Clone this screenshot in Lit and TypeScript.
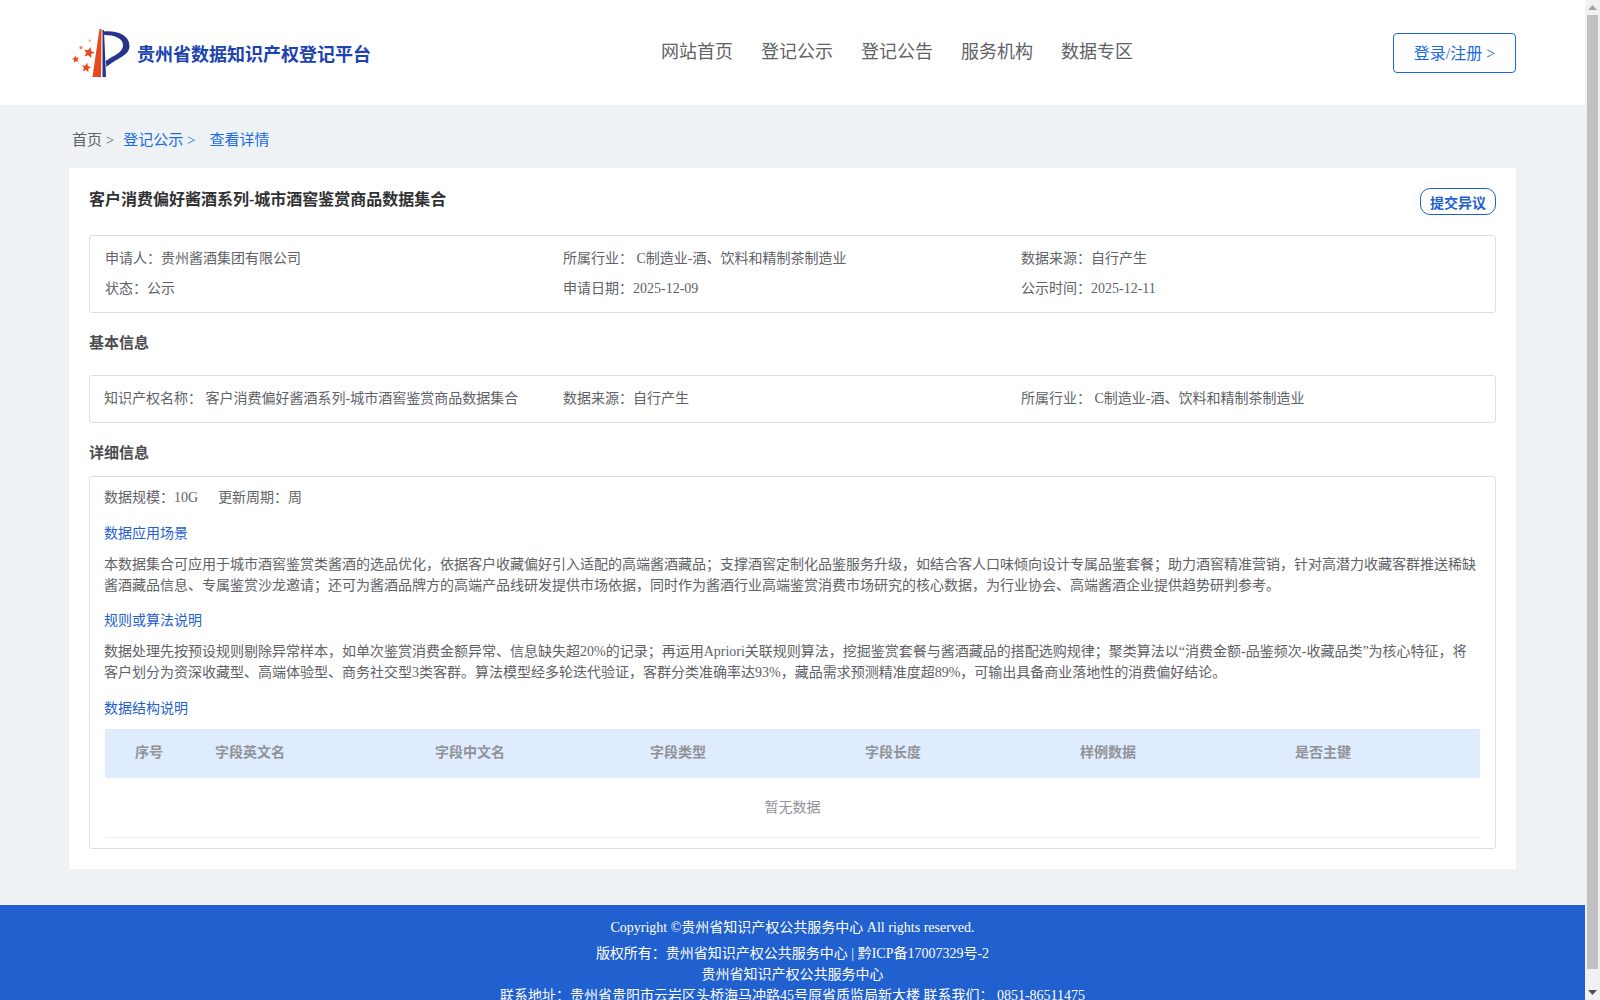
import { LitElement, html, css, svg } from 'lit';
import { customElement } from 'lit/decorators.js';

const columns = ['序号', '字段英文名', '字段中文名', '字段类型', '字段长度', '样例数据', '是否主键'];

// five pointed star, returned as polygon points
function starPoints(cx: number, cy: number, r: number, rot: number) {
  const pts: string[] = [];
  for (let i = 0; i < 10; i++) {
    const rad = i % 2 === 0 ? r : r * 0.45;
    const a = ((rot + i * 36 - 90) * Math.PI) / 180;
    pts.push(`${(cx + rad * Math.cos(a)).toFixed(2)},${(cy + rad * Math.sin(a)).toFixed(2)}`);
  }
  return pts.join(' ');
}

@customElement('app-root')
export class AppRoot extends LitElement {
  static styles = css`
    :host {
      display: flex;
      height: 1000px;
      overflow: hidden;
      font-family: 'Liberation Serif', 'Noto Sans CJK SC', serif;
      font-size: 14px;
      color: #606266;
    }
    .page { width: 1585px; flex: none; background: #eff2f5; }
    .scrollbar { width: 15px; background: #f1f1f1; display: flex; flex-direction: column; align-items: center; }
    .sb-btn { height: 15px; width: 15px; display: flex; align-items: center; justify-content: center; }
    .sb-thumb { width: 11px; height: 954px; background: #c1c1c1; flex: none; }
    .sb-space { flex: 1; }

    header { height: 105px; background: #fff; display: flex; align-items: center; padding: 0 69px 0 72px; box-sizing: border-box; }
    .logo { display: flex; align-items: center; width: 589px; flex: none; }
    .logo-name { font-size: 18px; font-weight: 700; color: #1c43b0; margin-left: 7px; }
    nav { display: flex; gap: 28px; font-size: 18px; color: #606266; margin-top: -5px; }
    .login { margin-left: auto; margin-top: 1px; width: 123px; height: 40px; box-sizing: border-box; border: 1px solid #1a6ae6; border-radius: 4px; padding-bottom: 2px; color: #1a6ae6; font-size: 16px; display: flex; align-items: center; justify-content: center; }

    .crumbs { height: 63px; display: flex; align-items: center; padding: 4px 0 0 72px; box-sizing: border-box; font-size: 15px; }
    .crumbs a { color: #1a6ae6; }
    .crumbs .first { margin-right: 9px; }
    .crumbs .second { margin-right: 14px; }

    .card { margin-left: 69px; width: 1447px; height: 701px; box-sizing: border-box; background: #fff; padding: 20px 20px 20px 20px; }
    .title-row { display: flex; justify-content: space-between; height: 47px; }
    h1 { margin: 0; font-size: 16px; font-weight: 700; color: #303133; line-height: 24px; }
    .dispute { width: 76px; height: 27px; box-sizing: border-box; border: 1px solid #1f5fce; border-radius: 10px; color: #1f5fce; font-size: 14px; font-weight: 700; display: flex; align-items: center; justify-content: center; }

    .box { border: 1px solid #dcdfe6; border-radius: 3px; box-sizing: border-box; }
    .grid { display: grid; grid-template-columns: 459px 458px 458px; }
    .summary { height: 78px; padding: 11px 15px 7px; row-gap: 8px; grid-auto-rows: 22px; grid-template-columns: 458px 458px 458px; }
    .basic { height: 48px; padding: 0 14px 4px; align-items: center; }
    h2 { margin: 0; font-size: 15px; font-weight: 700; color: #4b4d50; box-sizing: border-box; }
    .h-basic { height: 62px; display: flex; align-items: center; padding-bottom: 6px; }
    .h-detail { height: 53px; display: flex; align-items: center; padding-top: 4px; }

    .detail { height: 373px; padding: 11px 15px 10px 15px; }
    .meta { display: flex; gap: 20px; line-height: 20px; margin-left: -1px; }
    h3 { margin: 15.5px 0 10px -1px; font-size: 14px; font-weight: 400; color: #1f5fce; line-height: 20px; }
    p { margin: 0 0 0 -1px; line-height: 21px; }

    .table { margin-top: 10.5px; }
    .thead { display: grid; grid-template-columns: 90px 220px 215px 215px 215px 215px 1fr; height: 49px; box-sizing: border-box; padding-bottom: 5px; align-items: center; background: #dfecfd; font-weight: 700; color: #909399; }
    .thead span { padding-left: 20px; }
    .thead span:first-child { padding-left: 30px; }
    .empty { height: 60px; box-sizing: border-box; padding-bottom: 4px; display: flex; align-items: center; justify-content: center; color: #909399; border-bottom: 1px solid #ebeef5; }

    footer { margin-top: 36px; height: 95px; background: #2060cf; color: #fff; text-align: center; padding-top: 12px; box-sizing: border-box; overflow: hidden; }
    footer div { line-height: 21px; }
    footer .copy { margin-bottom: 5px; }
  `;

  private logo() {
    return html`<svg width="58" height="48" viewBox="0 0 58 48">
      ${svg`
        <path d="M27.500 0 L29.500 0 L29 48 L20.500 48 Z" fill="#e8481c"/>
        <path d="M30.500 1 L32 1 L34 48 L30.500 48 Z" fill="#28348c"/>
        <path d="M31 2.500 C45 1 57.500 6 57.500 17 C57.500 27 43 30 34.500 38 L33.700 32 C42 26 51 24 51 16 C51 9 42 6 32.500 6 Z" fill="#28348c"/>
        <polygon points=${starPoints(17, 23.7, 5.8, 15)} fill="#e8481c"/>
        <polygon points=${starPoints(3.7, 30.3, 3.8, -10)} fill="#e8481c"/>
        <polygon points=${starPoints(14.3, 38.7, 5, 10)} fill="#e8481c"/>
        <circle cx="9" cy="18.700" r="1.700" fill="#f0885f"/>
        <circle cx="17.700" cy="11.700" r="1.200" fill="#f4a98c"/>
      `}
    </svg>`;
  }

  render() {
    return html`
      <div class="page">
        <header>
          <div class="logo">${this.logo()}<span class="logo-name">贵州省数据知识产权登记平台</span></div>
          <nav><span>网站首页</span><span>登记公示</span><span>登记公告</span><span>服务机构</span><span>数据专区</span></nav>
          <div class="login">登录/注册 &gt;</div>
        </header>
        <div class="crumbs">
          <span class="first">首页 &gt;</span>
          <a class="second">登记公示 &gt;</a>
          <a>查看详情</a>
        </div>
        <section class="card">
          <div class="title-row">
            <h1>客户消费偏好酱酒系列-城市酒窖鉴赏商品数据集合</h1>
            <div class="dispute">提交异议</div>
          </div>
          <div class="box grid summary">
            <span>申请人：贵州酱酒集团有限公司</span>
            <span>所属行业： C制造业-酒、饮料和精制茶制造业</span>
            <span>数据来源：自行产生</span>
            <span>状态：公示</span>
            <span>申请日期：2025-12-09</span>
            <span>公示时间：2025-12-11</span>
          </div>
          <h2 class="h-basic">基本信息</h2>
          <div class="box grid basic">
            <span>知识产权名称： 客户消费偏好酱酒系列-城市酒窖鉴赏商品数据集合</span>
            <span>数据来源：自行产生</span>
            <span>所属行业： C制造业-酒、饮料和精制茶制造业</span>
          </div>
          <h2 class="h-detail">详细信息</h2>
          <div class="box detail">
            <div class="meta"><span>数据规模：10G</span><span>更新周期：周</span></div>
            <h3>数据应用场景</h3>
            <p>本数据集合可应用于城市酒窖鉴赏类酱酒的选品优化，依据客户收藏偏好引入适配的高端酱酒藏品；支撑酒窖定制化品鉴服务升级，如结合客人口味倾向设计专属品鉴套餐；助力酒窖精准营销，针对高潜力收藏客群推送稀缺酱酒藏品信息、专属鉴赏沙龙邀请；还可为酱酒品牌方的高端产品线研发提供市场依据，同时作为酱酒行业高端鉴赏消费市场研究的核心数据，为行业协会、高端酱酒企业提供趋势研判参考。</p>
            <h3>规则或算法说明</h3>
            <p>数据处理先按预设规则剔除异常样本，如单次鉴赏消费金额异常、信息缺失超20%的记录；再运用Apriori关联规则算法，挖掘鉴赏套餐与酱酒藏品的搭配选购规律；聚类算法以“消费金额-品鉴频次-收藏品类”为核心特征，将客户划分为资深收藏型、高端体验型、商务社交型3类客群。算法模型经多轮迭代验证，客群分类准确率达93%，藏品需求预测精准度超89%，可输出具备商业落地性的消费偏好结论。</p>
            <h3>数据结构说明</h3>
            <div class="table">
              <div class="thead">${columns.map((c) => html`<span>${c}</span>`)}</div>
              <div class="empty">暂无数据</div>
            </div>
          </div>
        </section>
        <footer>
          <div class="copy">Copyright ©贵州省知识产权公共服务中心 All rights reserved.</div>
          <div>版权所有：贵州省知识产权公共服务中心 | 黔ICP备17007329号-2</div>
          <div>贵州省知识产权公共服务中心</div>
          <div>联系地址：贵州省贵阳市云岩区头桥海马冲路45号原省质监局新大楼 联系我们： 0851-86511475</div>
        </footer>
      </div>
      <div class="scrollbar">
        <div class="sb-btn"><svg width="9" height="5" viewBox="0 0 9 5"><path d="M4.500 0 L9 5 L0 5 Z" fill="#a3a3a3"/></svg></div>
        <div class="sb-thumb"></div>
        <div class="sb-space"></div>
        <div class="sb-btn"><svg width="9" height="5" viewBox="0 0 9 5"><path d="M0 0 L9 0 L4.500 5 Z" fill="#505050"/></svg></div>
      </div>
    `;
  }
}
